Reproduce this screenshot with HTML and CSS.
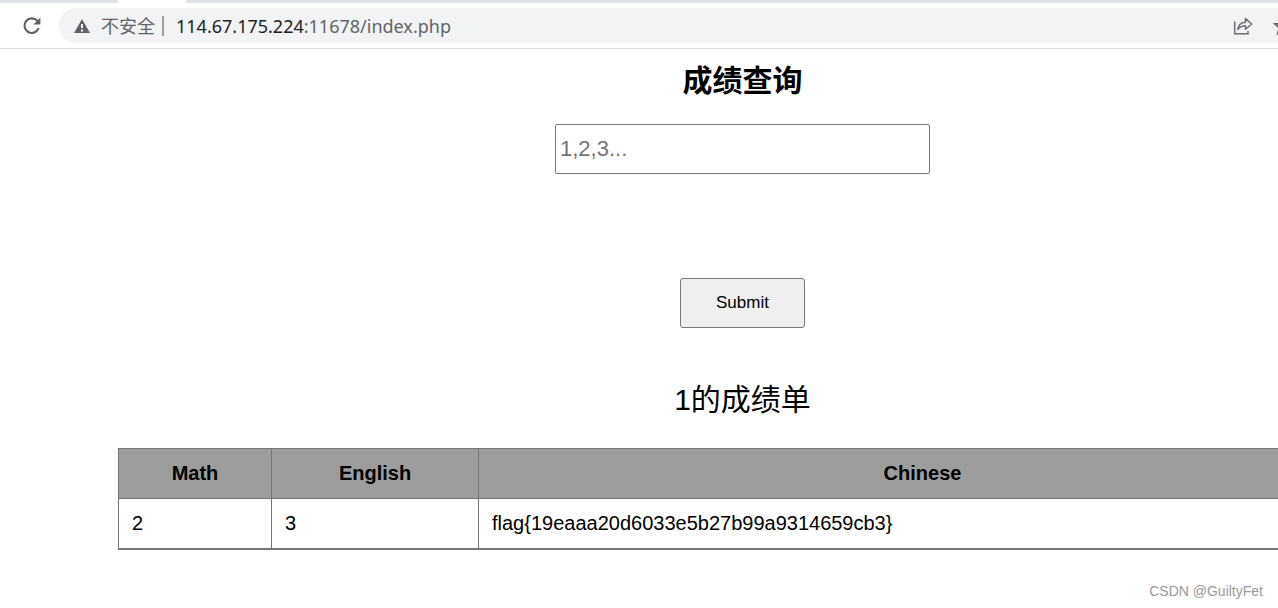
FILE: index.html
```html
<!DOCTYPE html>
<html lang="zh-CN">
<head>
<meta charset="utf-8">
<title>成绩查询</title>
<link rel="stylesheet" href="styles.css">
</head>
<body>
<header class="browser">
  <div class="tabs"><div class="tab-active"></div></div>
  <div class="toolbar">
    <button class="icon-button" type="button" aria-label="重新加载">
      <svg width="20" height="20" viewBox="0 0 20 20"><path d="M16.6 12.2A7.3 7.3 0 1 1 15.300 4.900L17 6.600" fill="none" stroke="#5f6368" stroke-width="2.100"/><path d="M18.400 1.500v7h-7z" fill="#5f6368"/></svg>
    </button>
    <div class="address">
      <svg class="warning" width="16" height="16" viewBox="0 0 16 16"><path fill="#5f6368" fill-rule="evenodd" d="M8 1 16 15H0ZM7 6v4h2V6ZM7 11.500v2h2v-2Z"/></svg>
      <span class="security">不安全</span>
      <span class="divider"></span>
      <span class="url"><span class="host">114.67.175.224</span>:11678/index.php</span>
      <button class="icon-button share" type="button" aria-label="分享">
        <svg width="20" height="20" viewBox="0 0 20 20" fill="none" stroke="#6b6f73" stroke-width="1.500"><path d="M1.700 5.500V17.800H15V15"/><path d="M4.800 13.500C5.200 9 8 6.500 12.500 6.200V2.600L18.700 8 12.500 13.200V9.800C9 9.800 6.700 11 4.800 13.500Z" stroke-linejoin="round"/></svg>
      </button>
      <button class="icon-button star" type="button" aria-label="收藏">
        <svg width="20" height="20" viewBox="0 0 20 20" fill="none" stroke="#5f6368" stroke-width="1.800"><path d="m10 2 2.300 5.400 5.900.5-4.500 3.900 1.400 5.700-5.100-3-5.100 3 1.400-5.700L1.800 7.900l5.900-.5Z"/></svg>
      </button>
    </div>
  </div>
</header>
<main class="page">
  <form class="query">
    <h1 class="title"><label for="id">成绩查询</label></h1>
    <input class="field" id="id" type="text" placeholder="1,2,3...">
    <button class="submit" type="button">Submit</button>
  </form>
  <p class="caption">1的成绩单</p>
  <table class="scores">
    <thead><tr><th class="math">Math</th><th class="english">English</th><th>Chinese</th></tr></thead>
    <tbody><tr><td>2</td><td>3</td><td>flag{19eaaa20d6033e5b27b99a9314659cb3}</td></tr></tbody>
  </table>
</main>
<footer class="credit">CSDN @GuiltyFet</footer>
</body>
</html>
```
FILE: styles.css
```css
* { box-sizing: border-box; }

body {
  margin: 0;
  overflow: hidden;
  background: #fff;
  color: #000;
  font-family: "Liberation Sans", "Noto Sans CJK SC", sans-serif;
}

.tabs {
  height: 3px;
  padding-left: 118px;
  background: #dee1e6;
}

.tab-active {
  width: 68px;
  height: 3px;
  background: #fff;
}

.toolbar {
  display: flex;
  align-items: center;
  gap: 17px;
  height: 46px;
  padding-left: 22px;
  overflow: hidden;
  border-bottom: 1px solid #dadce0;
}

.icon-button {
  display: flex;
  flex: none;
  padding: 0;
  border: 0;
  background: none;
}

.address {
  display: flex;
  flex: 1;
  align-items: center;
  height: 35px;
  margin-right: -40px;
  padding: 0 25px 0 15px;
  border-radius: 18px;
  background: #f1f3f4;
  color: #5f6368;
  font-family: "Noto Sans", "Noto Sans CJK SC", sans-serif;
  font-size: 18px;
  line-height: 24px;
}

.warning { margin-right: 11px; }

.divider {
  width: 2px;
  height: 20px;
  margin: 0 12px 0 7px;
  background: #9a9da1;
}

.host { color: #202124; }

.share { margin-left: auto; }

.star { margin-left: 20px; }

.page {
  width: calc(100% + 207px);
  padding: 10px 118px 0;
}

.query {
  display: flex;
  flex-direction: column;
  align-items: center;
}

.title {
  margin: 0 0 21px;
  font-size: 30px;
  line-height: 44px;
}

.field {
  width: 375px;
  height: 50px;
  padding: 0 4px;
  border: 1px solid #767676;
  border-radius: 2px;
  font-family: inherit;
  font-size: 22px;
}

.field::placeholder { color: #757575; }

.submit {
  width: 125px;
  height: 50px;
  margin-top: 104px;
  border: 1px solid #767676;
  border-radius: 3px;
  background: #efefef;
  color: #000;
  font-family: inherit;
  font-size: 17px;
}

.caption {
  margin: 50px 0 26px;
  font-size: 30px;
  line-height: 44px;
  text-align: center;
}

.scores {
  width: 100%;
  border-collapse: collapse;
  border-bottom: 2px solid #767676;
  font-size: 20px;
  line-height: 23px;
}

.scores th,
.scores td {
  height: 50px;
  padding: 13px;
  border: 1px solid #767676;
  text-align: left;
}

.scores tbody td { border-bottom-width: 2px; }

.scores th {
  background: #9d9d9d;
  text-align: center;
}

.math { width: 153px; }

.english { width: 207px; }

.credit {
  padding: 33px 15px 0 0;
  color: #999;
  font-size: 14px;
  line-height: 16px;
  text-align: right;
}
```
